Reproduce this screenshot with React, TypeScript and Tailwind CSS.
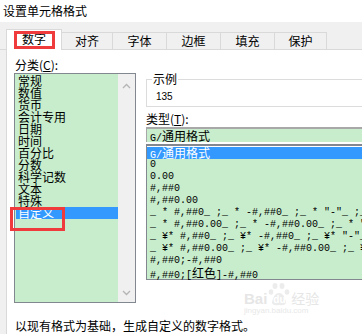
import React from "react";

const tabs = [
  { label: "数字", w: "w-[56px]", active: true },
  { label: "对齐", w: "w-[51px]" },
  { label: "字体", w: "w-[54px]" },
  { label: "边框", w: "w-[54px]" },
  { label: "填充", w: "w-[54px]" },
  { label: "保护", w: "w-[52px]" },
];

const categories = ["常规", "数值", "货币", "会计专用", "日期", "时间", "百分比", "分数", "科学记数", "文本", "特殊", "自定义"];

const formats = [
  "G/通用格式",
  "0",
  "0.00",
  "#,##0",
  "#,##0.00",
  '_ * #,##0_ ;_ * -#,##0_ ;_ * "-"_ ;_ @_ ',
  '_ * #,##0.00_ ;_ * -#,##0.00_ ;_ * "-"??_ ;_ @_ ',
  '_ ¥* #,##0_ ;_ ¥* -#,##0_ ;_ ¥* "-"_ ;_ @_ ',
  '_ ¥* #,##0.00_ ;_ ¥* -#,##0.00_ ;_ ¥* "-"??_ ;_ @_ ',
  "#,##0;-#,##0",
  "#,##0;[红色]-#,##0",
];

// split ascii (mono 6px) from CJK glyphs (12px)
function FormatText({ text }: { text: string }) {
  const parts = text.split(/([\u4e00-\u9fff]+)/);
  return (
    <>
      {parts.map((p, i) =>
        /[\u4e00-\u9fff]/.test(p) ? (
          <span key={i} className="text-[12px] font-['Noto_Sans_CJK_SC',sans-serif]">
            {p}
          </span>
        ) : (
          <span key={i}>{p}</span>
        )
      )}
    </>
  );
}

function Chevron({ up }: { up?: boolean }) {
  return (
    <svg width="9" height="6" viewBox="0 0 9 6" className="block">
      <path
        d={up ? "M1 5 L4.5 1.5 L8 5" : "M1 1 L4.5 4.5 L8 1"}
        fill="none"
        stroke="#b4b4b4"
        strokeWidth="1.3"
      />
    </svg>
  );
}

export default function App() {
  return (
    <div className="relative w-[362px] h-[334px] overflow-hidden bg-white text-black text-[12px] font-['Noto_Sans_CJK_SC',sans-serif]">
      {/* title */}
      <div className="h-[22px] pl-[3px] leading-[21px]">设置单元格格式</div>

      {/* tab strip */}
      <div className="flex h-[28px] items-end bg-[#f0f0f0]">
        <div className="w-[6px] h-full border-b border-[#d9d9d9]" />
        {tabs.map((t) =>
          t.active ? (
            <div
              key={t.label}
              className={`${t.w} h-[21px] shrink-0 bg-white border-t border-l border-r border-[#d9d9d9] flex items-center justify-center pb-[2px] leading-[12px]`}
            >
              {t.label}
            </div>
          ) : (
            <div
              key={t.label}
              className={`${t.w} h-[18px] shrink-0 border-t border-r border-b border-[#d9d9d9] flex items-center justify-center leading-[12px]`}
            >
              {t.label}
            </div>
          )
        )}
        <div className="flex-1 h-full border-b border-[#d9d9d9]" />
      </div>

      {/* panel */}
      <div className="flex bg-[#f0f0f0] h-[284px]">
        <div className="w-[6px] shrink-0" />
        <div className="flex-1 bg-white border-l border-[#d9d9d9] pl-[7px] pt-[7px] min-w-0">
          <div className="flex gap-[10px]">
            {/* left column */}
            <div className="w-[122px] shrink-0">
              <div className="h-[16px] leading-[15px] pl-[1px]">
                分类(<span className="underline">C</span>):
              </div>
              <div className="h-[230px] border border-[#828790] flex">
                <div className="flex-1 bg-[#c7edcc] pl-[1px] pt-[1px]">
                  {categories.map((c) => (
                    <div
                      key={c}
                      className={
                        c === "自定义"
                          ? "h-[12px] leading-[12px] pl-[2px] bg-[#3399ff] text-white"
                          : "h-[12px] leading-[12px] pl-[2px]"
                      }
                    >
                      {c}
                    </div>
                  ))}
                </div>
                <div className="w-[17px] bg-[#f0f0f0] flex flex-col items-center justify-between pt-[9px] pb-[6px]">
                  <Chevron up />
                  <Chevron />
                </div>
              </div>
            </div>

            {/* right column */}
            <div className="w-[280px] shrink-0 pt-[16px]">
              <fieldset className="h-[34px] border border-[#dcdcdc]">
                <legend className="ml-[5px] px-[1px] leading-[12px]">示例</legend>
                <div className="pl-[9px] pt-[5px] leading-[14px] text-[10px] font-['Liberation_Sans',sans-serif]">135</div>
              </fieldset>
              <div className="mt-[4px] h-[16px] leading-[15px]">
                类型(<span className="underline">T</span>):
              </div>
              <div className="h-[15px] border-t-2 border-l border-[#a8a8a8] bg-[#c7edcc] pl-[3px] leading-[13px] font-['Liberation_Mono',monospace] text-[10px]">
                <FormatText text="G/通用格式" />
              </div>
              <div className="mt-[2px] h-[136px] border-t-2 border-l border-b border-[#828790] bg-white pt-[1px] font-['Liberation_Mono',monospace] text-[10px]">
                <div className="bg-[#c7edcc] h-full">
                  {formats.map((f, i) => (
                    <div
                      key={f}
                      className={
                        i === 0
                          ? "h-[12px] leading-[12px] pl-[3px] whitespace-pre bg-[#3399ff] text-white"
                          : "h-[12px] leading-[12px] pl-[3px] whitespace-pre"
                      }
                    >
                      <FormatText text={f} />
                    </div>
                  ))}
                </div>
              </div>
            </div>
          </div>

          <div className="mt-[16px] leading-[14px] pl-[1px] whitespace-nowrap">
            以现有格式为基础，生成自定义的数字格式。
          </div>
        </div>
      </div>

      {/* red annotation boxes */}
      <div className="absolute left-[14px] top-[31px] w-[41px] h-[18px] border-[3px] border-[#ef3b3b]" />
      <div className="absolute left-[10px] top-[207px] w-[55px] h-[24px] border-[3px] border-[#ef3b3b]" />

      {/* watermark */}
      <div className="absolute left-[244px] top-[280px] w-[90px] pointer-events-none select-none">
        <div className="flex items-end h-[26px]">
          <span className="text-[15px] leading-[15px] font-bold text-[#e6e6e6] font-['Liberation_Sans',sans-serif]">Bai</span>
          <span className="relative w-[22px] h-[24px] mx-[1px]">
            <svg width="22" height="24" viewBox="0 0 22 24" className="absolute left-0 top-0">
              <ellipse cx="7" cy="4" rx="2.5" ry="3" fill="#ececec" />
              <ellipse cx="14" cy="4" rx="2.5" ry="3" fill="#ececec" />
              <ellipse cx="3" cy="10" rx="2.3" ry="2.8" fill="#ececec" />
              <ellipse cx="19" cy="10" rx="2.3" ry="2.8" fill="#ececec" />
              <path d="M4 20 Q6 11 11 11 Q16 11 18 20 Q18 24 11 23 Q4 24 4 20Z" fill="#ececec" />
            </svg>
            <span className="absolute left-[5px] top-[13px] text-[10px] leading-[10px] font-bold text-white font-['Liberation_Sans',sans-serif]">du</span>
          </span>
          <span className="text-[14px] leading-[15px] text-[#e6e6e6]">经验</span>
        </div>
        <div className="text-[8px] leading-[8px] mt-[1px] text-[#e8e8e8] font-['Liberation_Sans',sans-serif]">jingyan.baidu.com</div>
      </div>
    </div>
  );
}
